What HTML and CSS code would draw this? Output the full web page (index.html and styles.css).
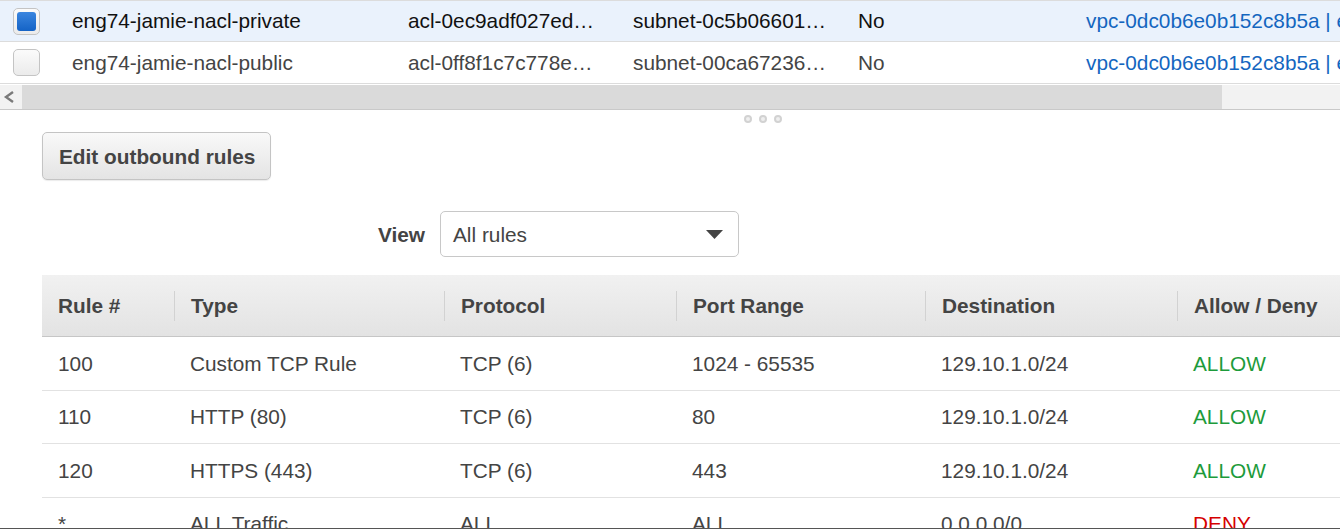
FILE: index.html
```html
<!DOCTYPE html>
<html>
<head>
<meta charset="utf-8">
<link rel="stylesheet" href="styles.css">
</head>
<body>
<div class="viewport">
  <div class="list">
    <div class="row selected">
      <div class="cell c-check"><span class="checkbox"><span class="mark"></span></span></div>
      <div class="cell c-name">eng74-jamie-nacl-private</div>
      <div class="cell c-id">acl-0ec9adf027ed4b1a2</div>
      <div class="cell c-id">subnet-0c5b0660172a9e3f1</div>
      <div class="cell c-main">No</div>
      <div class="cell c-vpc"><span class="link">vpc-0dc0b6e0b152c8b5a | eng74-jamie-vpc</span></div>
    </div>
    <div class="row">
      <div class="cell c-check"><span class="checkbox"></span></div>
      <div class="cell c-name">eng74-jamie-nacl-public</div>
      <div class="cell c-id">acl-0ff8f1c7c778e5d21</div>
      <div class="cell c-id">subnet-00ca67236b81f04c9</div>
      <div class="cell c-main">No</div>
      <div class="cell c-vpc"><span class="link">vpc-0dc0b6e0b152c8b5a | eng74-jamie-vpc</span></div>
    </div>
  </div>
  <div class="hscroll">
    <div class="arrow"><svg width="22" height="24" viewBox="0 0 22 24"><polyline points="13,7 6,12 13,17" fill="none" stroke="#7a7a7a" stroke-width="2.4"/></svg></div>
    <div class="thumb"></div>
    <div class="track"></div>
  </div>
  <div class="splitter"><span class="dot"></span><span class="dot"></span><span class="dot"></span></div>
  <div class="details">
    <button class="btn">Edit outbound rules</button>
    <div class="view-row">
      <label class="view-label">View</label>
      <div class="select"><span>All rules</span><svg class="caret" width="17" height="9" viewBox="0 0 17 9"><polygon points="0,0 17,0 8.5,9" fill="#444"/></svg></div>
    </div>
    <table class="rules">
      <colgroup>
        <col class="w1"><col class="w2"><col class="w3"><col class="w4"><col class="w5"><col class="w6">
      </colgroup>
      <thead>
        <tr>
          <th><div class="th-in">Rule #</div></th>
          <th><div class="th-in">Type</div></th>
          <th><div class="th-in">Protocol</div></th>
          <th><div class="th-in">Port Range</div></th>
          <th><div class="th-in">Destination</div></th>
          <th><div class="th-in">Allow / Deny</div></th>
        </tr>
      </thead>
      <tbody>
        <tr><td>100</td><td>Custom TCP Rule</td><td>TCP (6)</td><td>1024 - 65535</td><td>129.10.1.0/24</td><td class="allow">ALLOW</td></tr>
        <tr><td>110</td><td>HTTP (80)</td><td>TCP (6)</td><td>80</td><td>129.10.1.0/24</td><td class="allow">ALLOW</td></tr>
        <tr><td>120</td><td>HTTPS (443)</td><td>TCP (6)</td><td>443</td><td>129.10.1.0/24</td><td class="allow">ALLOW</td></tr>
        <tr><td>*</td><td>ALL Traffic</td><td>ALL</td><td>ALL</td><td>0.0.0.0/0</td><td class="deny">DENY</td></tr>
      </tbody>
    </table>
  </div>
</div>
</body>
</html>
```
FILE: styles.css
```css
body {
  margin: 0;
  background: #fff;
  font-family: "Liberation Sans", Arial, sans-serif;
  font-size: 20.8px;
  color: #444;
}

.viewport {
  height: 529px;
  overflow: hidden;
  box-sizing: border-box;
  border-bottom: 1px solid #555;
}

/* top list */
.row {
  display: flex;
  align-items: center;
  height: 41px;
  border-bottom: 1px solid #dcdcdc;
  color: #444;
}
.row:first-child {
  border-top: 1px solid #dcdcdc;
  height: 40px;
}
.row.selected {
  background: #eaf2fc;
  color: #111;
}
.cell {
  flex: none;
  box-sizing: border-box;
  padding: 0 14px 0 16px;
  white-space: nowrap;
  overflow: hidden;
  text-overflow: ellipsis;
}
.c-check {
  width: 56px;
  padding: 0 0 0 13px;
  display: flex;
  align-items: center;
}
.checkbox {
  width: 27px;
  height: 27px;
  box-sizing: border-box;
  border: 1px solid #c4c4c4;
  border-radius: 5px;
  background: linear-gradient(#fbfbfb, #ebebeb);
  display: flex;
  align-items: center;
  justify-content: center;
}
.mark {
  width: 19px;
  height: 19px;
  border-radius: 3px;
  background: linear-gradient(#3b86df, #1463c6);
}
.c-name { width: 336px; }
.c-id { width: 225px; }
.c-main { width: 228px; }
.c-vpc {
  flex: 1;
  min-width: 0;
  text-overflow: clip;
}
.link { color: #1466bf; }

/* horizontal scrollbar */
.hscroll {
  display: flex;
  height: 24px;
  border-top: 1px solid #fff;
  border-bottom: 1px solid #c9c9c9;
  background: #f2f2f2;
}
.arrow {
  width: 22px;
  flex: none;
  display: flex;
}
.thumb {
  width: 1200px;
  flex: none;
  background: #dadada;
}
.track { flex: 1; }

/* splitter */
.splitter {
  display: flex;
  gap: 7px;
  padding: 5px 0 9px 744px;
}
.dot {
  width: 8px;
  height: 8px;
  box-sizing: border-box;
  border-radius: 50%;
  border: 2px solid #d2d2d2;
  background: #efefef;
}

/* details */
.details {
  padding-left: 42px;
}
.btn {
  display: block;
  width: 229px;
  height: 48px;
  box-sizing: border-box;
  border: 1px solid #c4c4c4;
  border-radius: 5px;
  background: linear-gradient(#f9f9f9, #e4e4e4);
  box-shadow: 0 1px 1px rgba(0, 0, 0, 0.08);
  font-family: inherit;
  font-size: 20.8px;
  font-weight: bold;
  color: #444;
  text-align: left;
  padding: 2px 0 0 16px;
  margin: 0;
}
.view-row {
  display: flex;
  align-items: center;
  margin-top: 31px;
}
.view-label {
  width: 383px;
  margin-right: 15px;
  padding-top: 2px;
  text-align: right;
  font-weight: bold;
  color: #444;
}
.select {
  width: 299px;
  height: 46px;
  box-sizing: border-box;
  border: 1px solid #c8c8c8;
  border-radius: 5px;
  padding: 2px 15px 0 12px;
  display: flex;
  align-items: center;
  justify-content: space-between;
  color: #444;
}
.caret { display: block; margin-top: -2px; }

/* rules table */
.rules {
  margin-top: 18px;
  border-collapse: collapse;
  table-layout: fixed;
  width: 1298px;
}
.w1 { width: 132px; }
.w2 { width: 270px; }
.w3 { width: 232px; }
.w4 { width: 249px; }
.w5 { width: 252px; }
.w6 { width: 163px; }
.rules th {
  height: 61px;
  padding: 0;
  background: linear-gradient(#f1f1f1, #e3e3e3);
  border-bottom: 1px solid #c6c6c6;
  text-align: left;
  font-weight: bold;
  color: #444;
  white-space: nowrap;
}
.th-in {
  padding: 0 16px;
  line-height: 30px;
  border-left: 1px solid #d2d2d2;
}
.rules th:first-child .th-in {
  border-left: none;
}
.rules td {
  height: 51.5px;
  padding: 1px 16px 0;
  border-bottom: 1px solid #e2e2e2;
  color: #444;
  white-space: nowrap;
}
.rules td.allow { color: #1d9b3b; }
.rules td.deny { color: #d50000; }
```
